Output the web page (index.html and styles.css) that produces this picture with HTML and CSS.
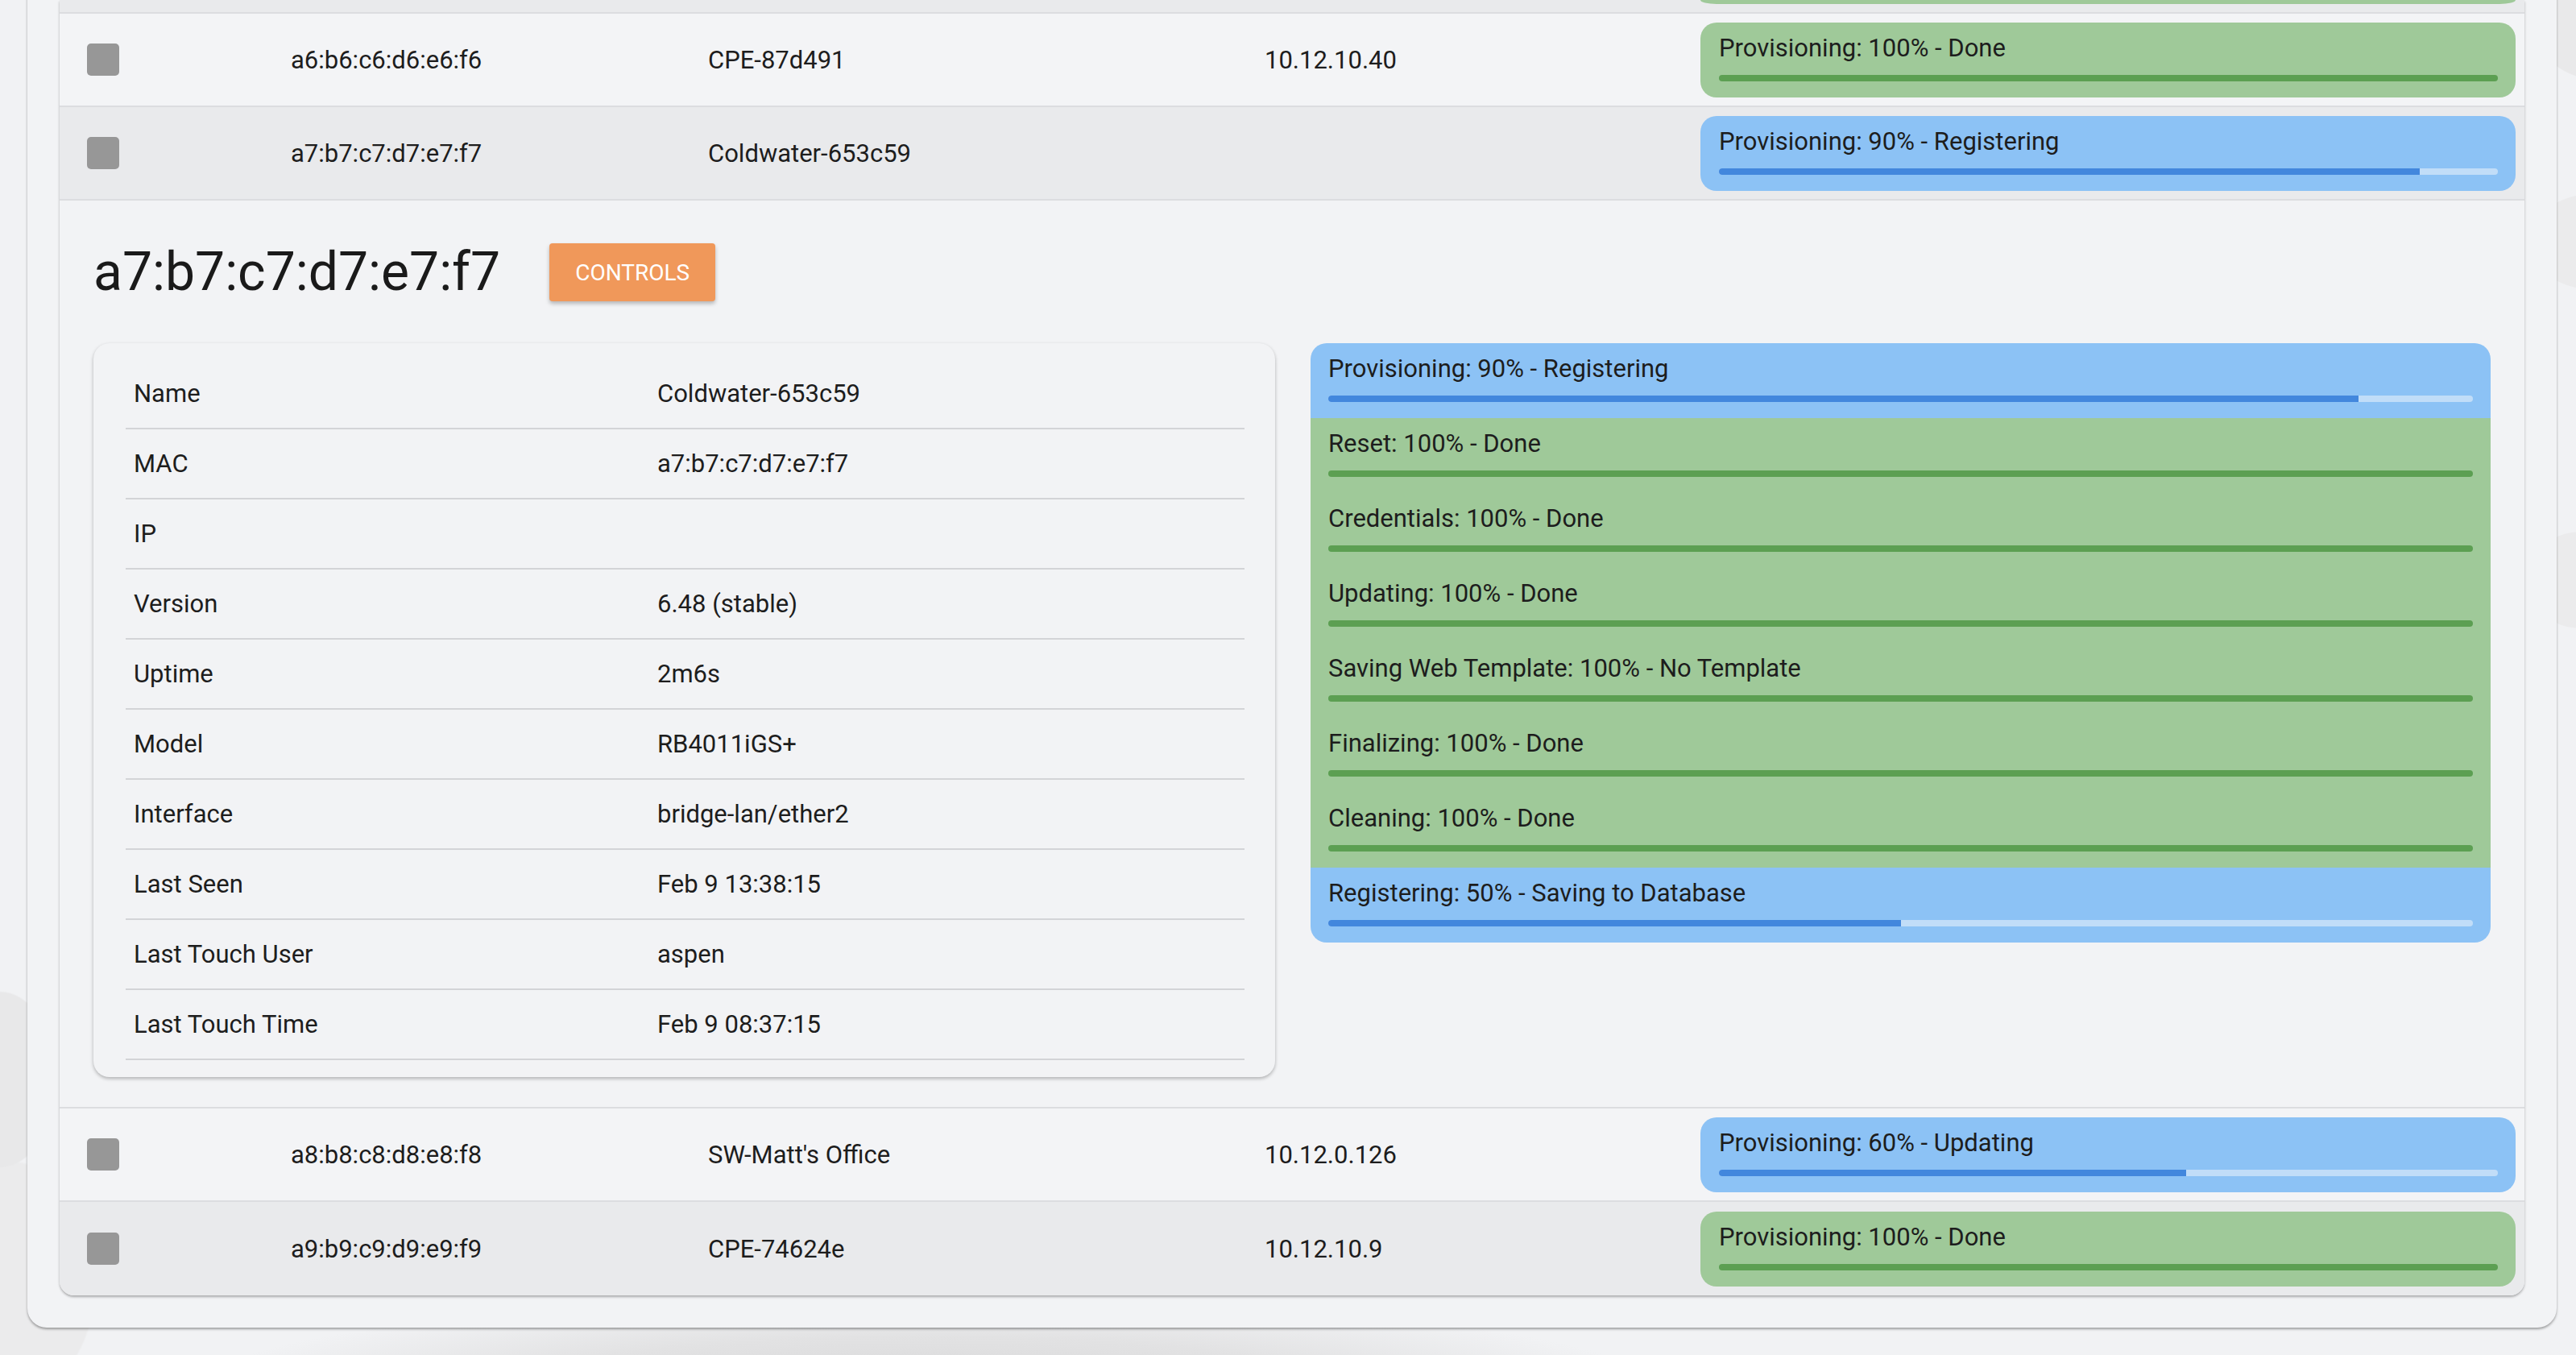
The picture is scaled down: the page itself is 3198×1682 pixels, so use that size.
FILE: index.html
```html
<!DOCTYPE html>
<html>
<head>
<meta charset="utf-8">
<link rel="stylesheet" href="styles.css">
</head>
<body>
<div class="page">
  <div class="panel">
    <div class="devices">
      <div class="row row-dark stub">
        <div></div><div></div><div></div><div></div>
        <div class="stub-pill"></div>
      </div>

      <div class="row row-light">
        <div class="cell-check"><span class="check"></span></div>
        <div>a6:b6:c6:d6:e6:f6</div>
        <div>CPE-87d491</div>
        <div>10.12.10.40</div>
        <div class="status green">
          <div class="status-label">Provisioning: 100% - Done</div>
          <div class="bar"><div class="fill" style="width:100%"></div></div>
        </div>
      </div>

      <div class="row row-dark">
        <div class="cell-check"><span class="check"></span></div>
        <div>a7:b7:c7:d7:e7:f7</div>
        <div>Coldwater-653c59</div>
        <div></div>
        <div class="status blue">
          <div class="status-label">Provisioning: 90% - Registering</div>
          <div class="bar"><div class="fill" style="width:90%"></div></div>
        </div>
      </div>

      <div class="detail">
        <div class="detail-head">
          <h1 class="detail-title">a7:b7:c7:d7:e7:f7</h1>
          <button class="btn-controls">CONTROLS</button>
        </div>
        <div class="detail-body">
          <div class="info-card">
            <table class="info">
              <tr><td>Name</td><td>Coldwater-653c59</td></tr>
              <tr><td>MAC</td><td>a7:b7:c7:d7:e7:f7</td></tr>
              <tr><td>IP</td><td></td></tr>
              <tr><td>Version</td><td>6.48 (stable)</td></tr>
              <tr><td>Uptime</td><td>2m6s</td></tr>
              <tr><td>Model</td><td>RB4011iGS+</td></tr>
              <tr><td>Interface</td><td>bridge-lan/ether2</td></tr>
              <tr><td>Last Seen</td><td>Feb 9 13:38:15</td></tr>
              <tr><td>Last Touch User</td><td>aspen</td></tr>
              <tr><td>Last Touch Time</td><td>Feb 9 08:37:15</td></tr>
            </table>
          </div>
          <div class="steps">
            <div class="step blue">
              <div class="status-label">Provisioning: 90% - Registering</div>
              <div class="bar"><div class="fill" style="width:90%"></div></div>
            </div>
            <div class="step green">
              <div class="status-label">Reset: 100% - Done</div>
              <div class="bar"><div class="fill" style="width:100%"></div></div>
            </div>
            <div class="step green">
              <div class="status-label">Credentials: 100% - Done</div>
              <div class="bar"><div class="fill" style="width:100%"></div></div>
            </div>
            <div class="step green">
              <div class="status-label">Updating: 100% - Done</div>
              <div class="bar"><div class="fill" style="width:100%"></div></div>
            </div>
            <div class="step green">
              <div class="status-label">Saving Web Template: 100% - No Template</div>
              <div class="bar"><div class="fill" style="width:100%"></div></div>
            </div>
            <div class="step green">
              <div class="status-label">Finalizing: 100% - Done</div>
              <div class="bar"><div class="fill" style="width:100%"></div></div>
            </div>
            <div class="step green">
              <div class="status-label">Cleaning: 100% - Done</div>
              <div class="bar"><div class="fill" style="width:100%"></div></div>
            </div>
            <div class="step blue">
              <div class="status-label">Registering: 50% - Saving to Database</div>
              <div class="bar"><div class="fill" style="width:50%"></div></div>
            </div>
          </div>
        </div>
      </div>

      <div class="row row-light">
        <div class="cell-check"><span class="check"></span></div>
        <div>a8:b8:c8:d8:e8:f8</div>
        <div>SW-Matt's Office</div>
        <div>10.12.0.126</div>
        <div class="status blue">
          <div class="status-label">Provisioning: 60% - Updating</div>
          <div class="bar"><div class="fill" style="width:60%"></div></div>
        </div>
      </div>

      <div class="row row-dark last">
        <div class="cell-check"><span class="check"></span></div>
        <div>a9:b9:c9:d9:e9:f9</div>
        <div>CPE-74624e</div>
        <div>10.12.10.9</div>
        <div class="status green">
          <div class="status-label">Provisioning: 100% - Done</div>
          <div class="bar"><div class="fill" style="width:100%"></div></div>
        </div>
      </div>
    </div>
  </div>
</div>
</body>
</html>
```

FILE: styles.css
```css
* { box-sizing: border-box; }

html, body {
  margin: 0;
  padding: 0;
  height: 100%;
  overflow: hidden;
}

body {
  font-family: Roboto, "Liberation Sans", sans-serif;
  font-size: 31px;
  color: #1d1d1d;
  background-color: #f1f2f4;
  background-image:
    radial-gradient(ellipse 70px 110px at 0px 1340px, #e8e8e9 98%, transparent 100%),
    radial-gradient(ellipse 110px 150px at 10px 1590px, #ebebec 98%, transparent 100%),
    radial-gradient(ellipse 80px 60px at 3230px 40px, #e9e9ea 98%, transparent 100%),
    radial-gradient(ellipse 80px 60px at 3220px 300px, #ebebec 98%, transparent 100%),
    radial-gradient(ellipse 60px 60px at 3200px 720px, #ebebec 98%, transparent 100%),
    radial-gradient(ellipse 900px 110px at 1150px 1720px, #d8d8d9 0%, #e2e2e3 55%, transparent 100%);
  background-repeat: no-repeat;
}

.page {
  padding: 0 24px 0 34px;
}

.panel {
  margin-top: -40px;
  width: 3140px;
  padding: 40px;
  background: #f2f3f5;
  border-radius: 24px;
  box-shadow: 0 2px 3px rgba(0, 0, 0, 0.35);
}

.devices {
  background: #f3f4f6;
  border-radius: 0 0 18px 18px;
  box-shadow: 0 2px 3px rgba(0, 0, 0, 0.3);
  overflow: hidden;
}

.row {
  display: grid;
  grid-template-columns: 287px 518px 691px 541px 1fr;
  align-items: center;
  height: 116px;
  border-bottom: 2px solid #dcdde0;
  padding-right: 11px;
}

.row.last { border-bottom: none; height: 116px; }

.row-light { background: #f3f4f6; }
.row-dark { background: #e9eaec; }

.row.stub {
  height: 17px;
  align-items: start;
}

.stub-pill {
  height: 5px;
  background: #9fc999;
  border-radius: 0 0 20px 20px / 0 0 5px 5px;
}

.cell-check {
  padding-left: 34px;
  display: flex;
  align-items: center;
}

.check {
  display: block;
  width: 40px;
  height: 40px;
  background: #979797;
  border-radius: 5px;
}

.status,
.step {
  height: 93px;
  padding: 12px 22px 0 23px;
}

.status {
  border-radius: 20px;
}

.status-label {
  height: 38px;
  line-height: 40px;
  white-space: nowrap;
}

.bar {
  margin-top: 15px;
  height: 8px;
  border-radius: 4px;
  overflow: hidden;
}

.fill {
  height: 100%;
}

.green { background: #9fc999; }
.green .bar { background: #5c9f52; }
.green .fill { background: #5c9f52; }

.blue { background: #8cc2f5; }
.blue .bar { background: #c1ddf8; }
.blue .fill { background: #4287dd; }

.detail {
  padding: 53px 41px 37px 42px;
  background: #f2f3f5;
  border-bottom: 2px solid #dcdde0;
}

.detail-head {
  display: flex;
  align-items: center;
  gap: 61px;
  height: 72px;
}

.detail-title {
  margin: 0;
  font-size: 66px;
  font-weight: 400;
  line-height: 72px;
  color: #1a1a1a;
}

.btn-controls {
  font-family: Roboto, "Liberation Sans", sans-serif;
  font-size: 28px;
  color: #ffffff;
  background: #f0985a;
  border: none;
  border-radius: 4px;
  height: 72px;
  padding: 0 32px;
  box-shadow: 0 3px 5px rgba(0, 0, 0, 0.25);
}

.detail-body {
  display: grid;
  grid-template-columns: 1467px 1465px;
  gap: 44px;
  margin-top: 52px;
  align-items: start;
}

.info-card {
  background: #f2f3f5;
  border-radius: 20px;
  box-shadow: 0 2px 4px rgba(0, 0, 0, 0.28);
  padding: 19px 38px 21px 40px;
}

.info {
  width: 100%;
  border-collapse: collapse;
}

.info td {
  height: 87px;
  padding: 0 10px;
  border-bottom: 2px solid #d3d4d7;
  vertical-align: middle;
}

.info td:first-child {
  width: 650px;
}

.steps {
  border-radius: 20px;
  overflow: hidden;
}

.step {
  padding-left: 22px;
}
```
